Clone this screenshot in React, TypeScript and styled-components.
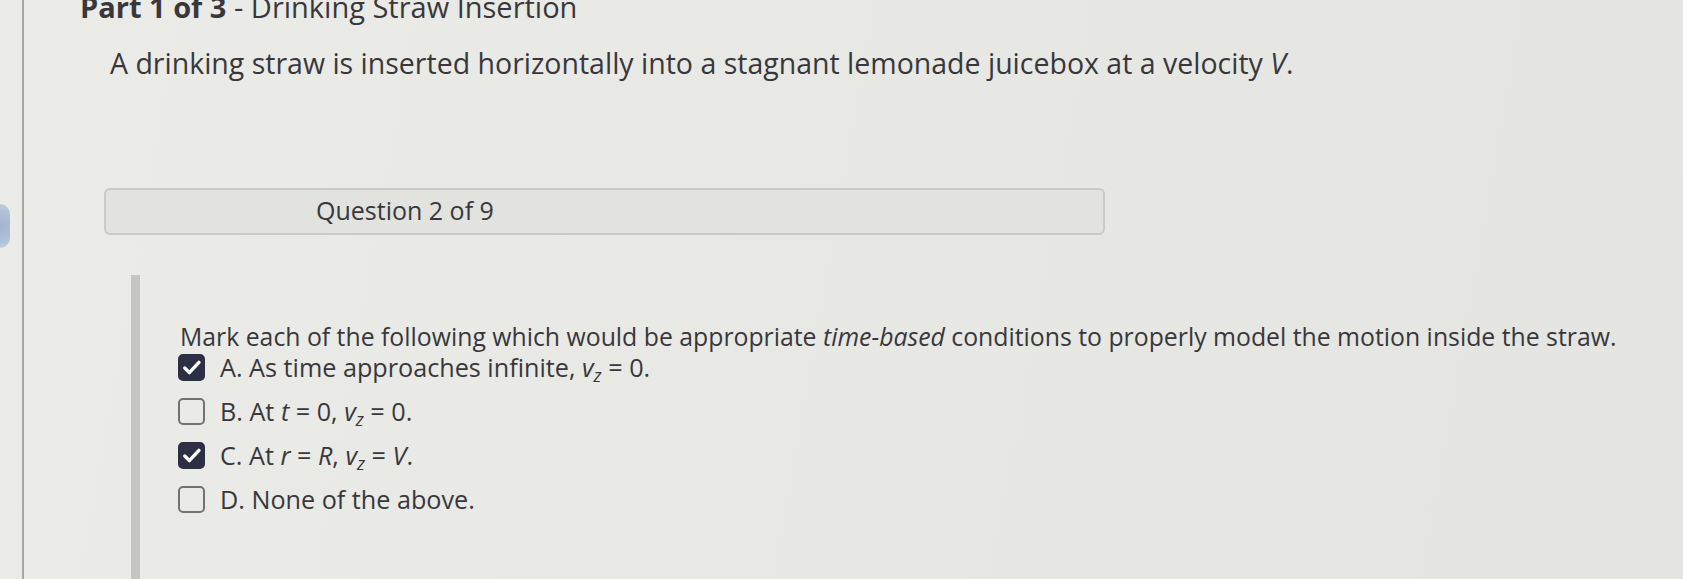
import React from "react";
import styled, { createGlobalStyle } from "styled-components";

const GlobalStyle = createGlobalStyle`
  html, body {
    margin: 0;
    padding: 0;
    height: 579px;
    overflow: hidden;
  }
  body {
    background: linear-gradient(100deg, #ebebe7 0%, #e8e8e4 45%, #e4e4e0 100%);
    font-family: "Open Sans", "Noto Sans", sans-serif;
    color: #38383c;
  }
`;

const Screen = styled.div`
  position: relative;
  height: 579px;
  overflow: hidden;
`;

const EdgeBlob = styled.div`
  position: absolute;
  left: 0;
  top: 204px;
  width: 10px;
  height: 44px;
  border-radius: 0 22px 22px 0;
  background: radial-gradient(circle at 0% 50%, #9fb4d0 0%, #b3c3d8 70%, #c7d1dd 100%);
`;

const Frame = styled.div`
  margin-left: 22px;
  height: 100%;
  border-left: 2px solid #a6a6a4;
  display: flex;
  flex-direction: column;
`;

const Title = styled.h1`
  margin: -10px 0 0 56px;
  font-size: 29px;
  line-height: 34px;
  font-weight: 400;
  white-space: nowrap;
  strong {
    font-weight: 700;
  }
`;

const Intro = styled.p`
  margin: 21px 0 0 86px;
  font-size: 28.5px;
  line-height: 36px;
  white-space: nowrap;
`;

const QuestionBar = styled.div`
  margin: 107px 0 0 80px;
  width: 1001px;
  height: 47px;
  box-sizing: border-box;
  border: 2px solid #cacac6;
  border-radius: 6px;
  background: #e2e2de;
  display: flex;
  align-items: center;
  padding: 0 0 4px 210px;
  font-size: 25px;
`;

const Section = styled.section`
  margin: 40px 0 0 107px;
  flex: 1;
  border-left: 9px solid #c5c5c1;
  padding: 45px 0 0 40px;
  display: flex;
  flex-direction: column;
`;

const Prompt = styled.p`
  margin: 0;
  font-size: 24.8px;
  line-height: 32px;
  white-space: nowrap;
`;

const Options = styled.ul`
  list-style: none;
  margin: -3px 0 0 -2px;
  padding: 0;
  display: flex;
  flex-direction: column;
  gap: 8px;
`;

const Option = styled.li`
  height: 36px;
  display: flex;
  align-items: center;
  gap: 15px;
  font-size: 25.2px;
  white-space: nowrap;
`;

const Box = styled.span<{ $checked: boolean }>`
  width: 27px;
  height: 27px;
  box-sizing: border-box;
  border-radius: 5px;
  flex: none;
  display: flex;
  align-items: center;
  justify-content: center;
  background: ${(p) => (p.$checked ? "#2d2f45" : "transparent")};
  border: 2px solid ${(p) => (p.$checked ? "#2d2f45" : "#727272")};
`;

const M = styled.i`
  font-style: italic;
`;

const Sub = styled.sub`
  font-size: 0.72em;
  font-style: italic;
  vertical-align: -0.28em;
  line-height: 0;
`;

const Check = () => (
  <svg width="20" height="17" viewBox="0 0 20 17" fill="none">
    <path
      d="M2.8 9 L7.4 13.6 L17 3.4"
      stroke="#ffffff"
      strokeWidth="3.4"
      strokeLinecap="round"
      strokeLinejoin="round"
    />
  </svg>
);

const Vz = () => (
  <>
    <M>v</M>
    <Sub>z</Sub>
  </>
);

type Opt = { checked: boolean; content: React.ReactNode };

const options: Opt[] = [
  {
    checked: true,
    content: (
      <>
        A. As time approaches infinite, <Vz /> = 0.
      </>
    ),
  },
  {
    checked: false,
    content: (
      <>
        B. At <M>t</M> = 0, <Vz /> = 0.
      </>
    ),
  },
  {
    checked: true,
    content: (
      <>
        C. At <M>r</M> = <M>R</M>, <Vz /> = <M>V</M>.
      </>
    ),
  },
  {
    checked: false,
    content: <>D. None of the above.</>,
  },
];

export default function App() {
  return (
    <>
      <GlobalStyle />
      <Screen>
        <EdgeBlob />
        <Frame>
          <Title>
            <strong>Part 1 of 3</strong> - Drinking Straw Insertion
          </Title>
          <Intro>
            A drinking straw is inserted horizontally into a stagnant lemonade
            juicebox at a velocity <M>V</M>.
          </Intro>
          <QuestionBar>Question 2 of 9</QuestionBar>
          <Section>
            <Prompt>
              Mark each of the following which would be appropriate{" "}
              <M>time-based</M> conditions to properly model the motion inside
              the straw.
            </Prompt>
            <Options>
              {options.map((o, i) => (
                <Option key={i}>
                  <Box $checked={o.checked}>{o.checked && <Check />}</Box>
                  <span>{o.content}</span>
                </Option>
              ))}
            </Options>
          </Section>
        </Frame>
      </Screen>
    </>
  );
}
